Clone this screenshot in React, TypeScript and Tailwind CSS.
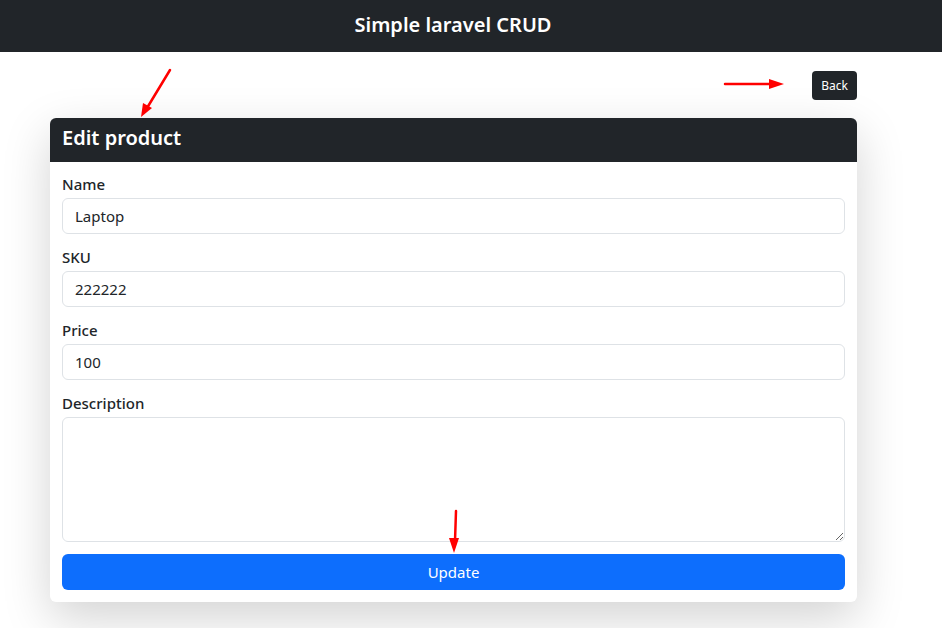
export default function App() {
  const fields = [
    { label: 'Name', value: 'Laptop' },
    { label: 'SKU', value: '222222' },
    { label: 'Price', value: '100' },
  ];

  return (
    <div className="relative min-h-[628px] bg-white text-[#212529] font-['Noto_Sans',sans-serif]">
      {/* Top bar */}
      <header className="h-[52px] bg-[#212529] flex items-center justify-center pr-[36px] pb-[2px]">
        <h1 className="text-white text-[20px] font-semibold">Simple laravel CRUD</h1>
      </header>

      <div className="ml-[50px] w-[807px]">
        <div className="flex justify-end mt-[19px]">
          <button className="h-[29px] px-[9px] rounded-[4px] bg-[#212529] text-white text-[12px]">Back</button>
        </div>

        {/* Card */}
        <div className="mt-[18px] bg-white rounded-[6px] shadow-[0_1rem_3rem_rgba(0,0,0,0.175)] overflow-hidden">
          <div className="h-[44px] bg-[#212529] px-[12px] pb-[4px] flex items-center">
            <h2 className="text-white text-[20px] font-semibold">Edit product</h2>
          </div>
          <form className="p-[12px] flex flex-col">
            {fields.map((f, i) => (
              <div key={f.label} className={i > 0 ? 'mt-[13px]' : ''}>
                <label className="block h-[20px] leading-[20px] mb-[4px] text-[15px] font-medium">{f.label}</label>
                <input
                  defaultValue={f.value}
                  className="block w-full h-[36px] px-[12px] text-[15px] border border-[#dee2e6] rounded-[6px] outline-none"
                />
              </div>
            ))}
            <div className="mt-[13px]">
              <label className="block h-[20px] leading-[20px] mb-[4px] text-[15px] font-medium">Description</label>
              <textarea className="block w-full h-[125px] px-[12px] py-[6px] text-[15px] border border-[#dee2e6] rounded-[6px] outline-none" />
            </div>
            <button
              type="button"
              className="mt-[12px] h-[36px] w-full rounded-[6px] bg-[#0d6efd] text-white text-[15px]"
            >
              Update
            </button>
          </form>
        </div>
      </div>

      {/* Annotation arrows */}
      <svg className="absolute inset-0 pointer-events-none" width="942" height="628">
        <g stroke="#f00" strokeWidth="2.5" fill="#f00" strokeLinecap="round">
          <line x1="170" y1="70" x2="147" y2="108" />
          <polygon points="141,117 143,103 152,108" stroke="none" />
          <line x1="725" y1="84" x2="772" y2="84" />
          <polygon points="784,84 769,79 769,89" stroke="none" />
          <line x1="456" y1="511" x2="455" y2="541" />
          <polygon points="454,553 449,538 459,538" stroke="none" />
        </g>
      </svg>
    </div>
  );
}
